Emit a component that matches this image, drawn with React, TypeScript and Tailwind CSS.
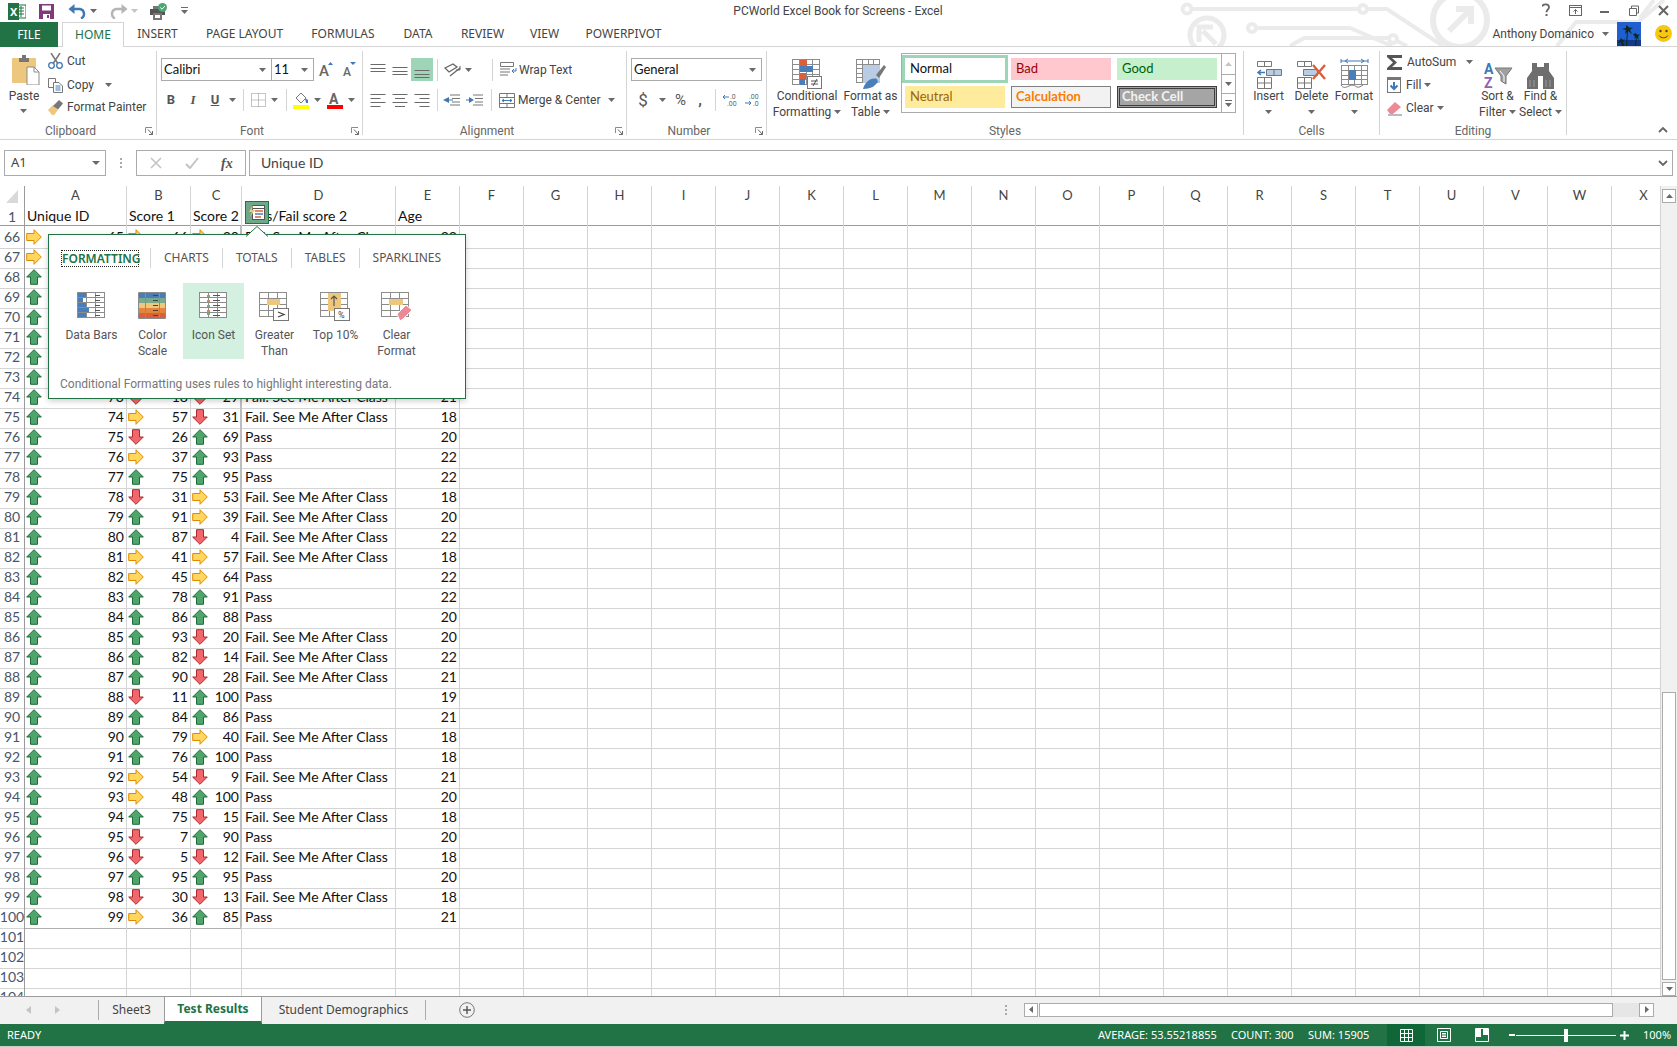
import React from 'react';

type ArrowKind = 'u' | 'y' | 'd';

// row number, B icon, B value, C icon, C value, pass, age
const rows: [number, ArrowKind, number, ArrowKind, number, boolean, number][] = [
  [66, 'y', 66, 'y', 30, false, 22],
  [67, 'y', 42, 'y', 50, false, 19],
  [68, 'u', 72, 'u', 81, true, 20],
  [69, 'u', 80, 'u', 77, true, 21],
  [70, 'u', 68, 'y', 44, false, 18],
  [71, 'u', 90, 'u', 92, true, 22],
  [72, 'y', 51, 'u', 70, true, 19],
  [73, 'd', 22, 'y', 60, true, 20],
  [74, 'd', 18, 'd', 29, false, 21],
  [75, 'y', 57, 'd', 31, false, 18],
  [76, 'd', 26, 'u', 69, true, 20],
  [77, 'y', 37, 'u', 93, true, 22],
  [78, 'u', 75, 'u', 95, true, 22],
  [79, 'd', 31, 'y', 53, false, 18],
  [80, 'u', 91, 'y', 39, false, 20],
  [81, 'u', 87, 'd', 4, false, 22],
  [82, 'y', 41, 'y', 57, false, 18],
  [83, 'y', 45, 'y', 64, true, 22],
  [84, 'u', 78, 'u', 91, true, 22],
  [85, 'u', 86, 'u', 88, true, 20],
  [86, 'u', 93, 'd', 20, false, 20],
  [87, 'u', 82, 'd', 14, false, 22],
  [88, 'u', 90, 'd', 28, false, 21],
  [89, 'd', 11, 'u', 100, true, 19],
  [90, 'u', 84, 'u', 86, true, 21],
  [91, 'u', 79, 'y', 40, false, 18],
  [92, 'u', 76, 'u', 100, true, 18],
  [93, 'y', 54, 'd', 9, false, 21],
  [94, 'y', 48, 'u', 100, true, 20],
  [95, 'u', 75, 'd', 15, false, 18],
  [96, 'd', 7, 'u', 90, true, 20],
  [97, 'd', 5, 'd', 12, false, 18],
  [98, 'u', 95, 'u', 95, true, 20],
  [99, 'd', 30, 'd', 13, false, 18],
  [100, 'y', 36, 'u', 85, true, 21],
];

const extraCols = 'F G H I J K L M N O P Q R S T U V W X'.split(' ');
const gridCols = 'grid grid-cols-[25px_102px_64px_51px_154px_64px_repeat(19,64px)]';
const line = 'border-r border-b border-[#d4d4d4]';

const Caret = ({ className = '' }: { className?: string }) => (
  <svg width="7" height="4" viewBox="0 0 7 4" className={className}>
    <path d="M0 0h7L3.5 4z" fill="#6a6a6a" />
  </svg>
);

const Arrow = ({ kind }: { kind: ArrowKind }) => {
  if (kind === 'u') {
    return (
      <svg width="16" height="16" viewBox="0 0 16 16" className="shrink-0">
        <path d="M8 .7 15.3 8H11.5v7.3h-7V8H.7z" fill="#4fa56c" stroke="#1f6b38" />
      </svg>
    );
  }
  if (kind === 'd') {
    return (
      <svg width="16" height="16" viewBox="0 0 16 16" className="shrink-0">
        <path d="M4.5.7h7V8h3.8L8 15.3.7 8h3.8z" fill="#f0686c" stroke="#a8282b" />
      </svg>
    );
  }
  return (
    <svg width="16" height="16" viewBox="0 0 16 16" className="shrink-0">
      <path d="M.7 4.5H8V.7L15.3 8 8 15.3v-3.8H.7z" fill="#ffd75e" stroke="#e08a00" />
    </svg>
  );
};

const AlignLines = ({ y, w = [15, 11, 15, 11] }: { y: number[]; w?: number[] }) => (
  <svg width="16" height="16" viewBox="0 0 16 16">
    {y.map((v, i) => (
      <rect key={i} x={(16 - (w[i] ?? 15)) / 2} y={v} width={w[i] ?? 15} height="1" fill="#6a6a6a" />
    ))}
  </svg>
);

const HAlign = ({ mode }: { mode: 'l' | 'c' | 'r' }) => {
  const ws = [15, 10, 15, 10];
  return (
    <svg width="16" height="14" viewBox="0 0 16 14">
      {ws.map((w, i) => (
        <rect
          key={i}
          x={mode === 'l' ? 0.5 : mode === 'r' ? 15.5 - w : (16 - w) / 2}
          y={1 + i * 4}
          width={w}
          height="1"
          fill="#6a6a6a"
        />
      ))}
    </svg>
  );
};

const TableGrid = ({ cols, rowsN, w, h }: { cols: number; rowsN: number; w: number; h: number }) => (
  <g stroke="#8c8c8c" fill="none">
    <rect x=".5" y=".5" width={w - 1} height={h - 1} fill="#fff" />
    {Array.from({ length: cols - 1 }).map((_, i) => (
      <path key={i} d={`M${0.5 + Math.round(((i + 1) * (w - 1)) / cols)} 0v${h}`} />
    ))}
    {Array.from({ length: rowsN - 1 }).map((_, i) => (
      <path key={i} d={`M0 ${0.5 + Math.round(((i + 1) * (h - 1)) / rowsN)}h${w}`} />
    ))}
  </g>
);

const Launcher = () => (
  <svg width="8" height="8" viewBox="0 0 8 8">
    <path d="M.5 6V.5H7" fill="none" stroke="#8a8a8a" />
    <path d="M3 2.5 7.5 7.5M7.5 4v3.5H4" fill="none" stroke="#6a6a6a" />
  </svg>
);

const Sep = ({ className = '' }: { className?: string }) => <div className={`w-px h-[22px] bg-[#d4d4d4] ${className}`} />;

const Group = ({
  label,
  launcher,
  className = '',
  children,
}: {
  label: string;
  launcher?: boolean;
  className?: string;
  children: React.ReactNode;
}) => (
  <div className={`flex flex-col mt-[4px] mb-[4px] border-r border-[#d4d4d4] shrink-0 ${className}`}>
    <div className="flex-1 min-h-0">{children}</div>
    <div className="flex items-center h-[14px] mb-[-3px] text-[#666]">
      <div className="flex-1 text-center leading-[14px]">{label}</div>
      {launcher && (
        <div className="w-[15px] flex justify-center">
          <Launcher />
        </div>
      )}
    </div>
  </div>
);

const BigButton = ({
  icon,
  lines,
  w,
  caret2 = false,
}: {
  icon: React.ReactNode;
  lines: string[];
  w: string;
  caret2?: boolean;
}) => (
  <div className={`flex flex-col items-center ${w}`}>
    <div className="h-[38px] flex items-end justify-center">{icon}</div>
    <div className="leading-[16px] mt-[-1px] whitespace-nowrap">{lines[0]}</div>
    {caret2 ? (
      <div className="leading-[16px] whitespace-nowrap flex items-center gap-[3px]">
        {lines[1]}
        <Caret />
      </div>
    ) : (
      <div className="h-[16px] flex items-center">
        <Caret />
      </div>
    )}
  </div>
);

const Combo = ({ text, w }: { text: string; w: string }) => (
  <div className={`${w} h-[23px] border border-[#ababab] bg-white flex items-center justify-between pl-[2px] pr-[5px]`}>
    <span className="font-['Lato',sans-serif] text-[13px] text-[#111]">{text}</span>
    <Caret />
  </div>
);

const PopTab = ({ children }: { children: string }) => (
  <div className="flex items-center">
    <div className="w-px h-[20px] bg-[#d4d4d4]" />
    <div className="px-[13px] font-['Noto_Sans',sans-serif]">{children}</div>
  </div>
);

const QuickItem = ({ icon, lines, active = false }: { icon: React.ReactNode; lines: string[]; active?: boolean }) => (
  <div className={`w-[61px] h-[76px] flex flex-col items-center ${active ? 'bg-[#d3f0e0]' : ''}`}>
    <div className="h-[35px] mt-[9px] flex items-start justify-center">{icon}</div>
    <div className="leading-[16px] text-center whitespace-nowrap">
      {lines.map((l) => (
        <div key={l}>{l}</div>
      ))}
    </div>
  </div>
);

export default function App() {
  return (
    <div className="relative w-[1677px] h-[1047px] overflow-hidden bg-white font-['Noto_Sans',sans-serif] text-[12px] text-[#444]">
      {/* title + tabs */}
      <div className="relative h-[47px]">
        <svg width="500" height="47" viewBox="1177 0 500 47" className="absolute right-0 top-0">
          <g fill="none" stroke="#ebebeb" strokeWidth="4">
            <circle cx="1187" cy="9" r="4.5" />
            <circle cx="1363" cy="9" r="4" />
            <path d="M1192 9h167M1368 9h19l56 37" />
            <circle cx="1460" cy="20" r="27" strokeWidth="6" />
            <path d="M1449 31 1471 9M1456 9h15v15" strokeWidth="6" />
            <circle cx="1207" cy="35" r="17" strokeWidth="5" />
            <path d="M1216 44 1203 31M1199 42V27h14" strokeWidth="5" />
            <circle cx="1252" cy="28" r="4" />
            <path d="M1257 28h93l42 18M1290 46l14-8h85" />
            <circle cx="1393" cy="39" r="4" />
            <path d="M1397 41l10 5M1557 46l19-24h62l26-22M1640 18l14-18" />
          </g>
        </svg>
        <div className="relative h-[22px] flex items-center">
          <div className="flex items-center">
            <svg width="18" height="17" viewBox="0 0 18 17" className="ml-[8px]">
              <rect x="7" y="2" width="11" height="13" fill="#fff" stroke="#217346" />
              <path d="M10 5h6M10 8h6M10 11h6M13 3v11" stroke="#217346" />
              <rect x="0" y="0" width="11" height="17" fill="#217346" />
              <text x="2" y="13" fill="#fff" fontSize="11" fontWeight="700">X</text>
            </svg>
            <svg width="15" height="15" viewBox="0 0 15 15" className="ml-[13px]">
              <path d="M0 0h15v15H0z" fill="#80397b" />
              <path d="M3 1.5h9v5H3z" fill="#fff" />
              <path d="M4 10h7v5H4z" fill="#fff" />
              <path d="M8 11h2v3H8z" fill="#80397b" />
            </svg>
            <svg width="19" height="15" viewBox="0 0 19 15" className="ml-[14px]">
              <path d="M5 5h7a5 5 0 0 1 1 9.5" fill="none" stroke="#3f78b5" strokeWidth="2.4" />
              <path d="M6.5 0v10L.5 5z" fill="#3f78b5" />
            </svg>
            <Caret className="ml-[3px]" />
            <svg width="19" height="15" viewBox="0 0 19 15" className="ml-[12px]">
              <path d="M14 5H7a5 5 0 0 0-1 9.5" fill="none" stroke="#b5b5b5" strokeWidth="2.4" />
              <path d="M12.5 0v10l6-5z" fill="#b5b5b5" />
            </svg>
            <svg width="7" height="4" viewBox="0 0 7 4" className="ml-[3px]">
              <path d="M0 0h7L3.5 4z" fill="#c4c4c4" />
            </svg>
            <svg width="18" height="17" viewBox="0 0 18 17" className="ml-[12px]">
              <path d="M3 3h8v4H3z" fill="#777" />
              <path d="M0 6h15v6H0z" fill="#555" />
              <path d="M3 10h9v7H3z" fill="#777" />
              <path d="M5 12h5v3H5z" fill="#fff" />
              <circle cx="12.5" cy="4.5" r="4.5" fill="#4aa873" />
              <path d="M10.3 4.5l1.7 1.7 2.8-3" fill="none" stroke="#fff" />
            </svg>
            <svg width="7" height="8" viewBox="0 0 7 8" className="ml-[13px]">
              <path d="M0 0h7v1H0zM0 3h7L3.5 7z" fill="#6a6a6a" />
            </svg>
          </div>
          <div className="flex-1" />
          <div className="absolute left-[688px] w-[300px] text-center text-[#444] whitespace-nowrap font-['Roboto',sans-serif]">PCWorld Excel Book for Screens - Excel</div>
          <svg width="131" height="16" viewBox="0 0 131 16" className="mr-[4px]">
            <path d="M0 3.5c1-3 7-3 7 .7 0 2.4-2.5 2.4-2.5 5" fill="none" stroke="#666" strokeWidth="1.8" />
            <rect x="3.5" y="11" width="2" height="2" fill="#666" />
            <g transform="translate(4 0)">
              <rect x="23.5" y="2.5" width="12" height="10" fill="none" stroke="#666" />
              <path d="M23.5 4.5h12M29.5 11V6.5M27.5 8.5l2-2 2 2" fill="none" stroke="#666" />
              <rect x="54" y="8" width="9" height="2" fill="#666" />
              <path d="M83.5 5.5h7v7h-7zM85.5 5.5v-2.500h7v7h-2" fill="none" stroke="#666" />
              <path d="M113 3l9 9M122 3l-9 9" stroke="#666" strokeWidth="2" />
            </g>
          </svg>
        </div>
        <div className="relative h-[25px] flex items-stretch border-b border-[#d4d4d4]">
          <div className="w-[58px] h-[25px] bg-[#217346] text-white flex items-center justify-center">FILE</div>
          <div className="ml-[4px] w-[62px] h-[25px] bg-white border border-b-0 border-[#d4d4d4] text-[#217346] flex items-center justify-center">HOME</div>
          <div className="w-[67px] text-center leading-[24px]">INSERT</div>
          <div className="w-[107px] text-center leading-[24px]">PAGE LAYOUT</div>
          <div className="w-[90px] text-center leading-[24px]">FORMULAS</div>
          <div className="w-[60px] text-center leading-[24px]">DATA</div>
          <div className="w-[69px] text-center leading-[24px]">REVIEW</div>
          <div className="w-[55px] text-center leading-[24px]">VIEW</div>
          <div className="w-[103px] text-center leading-[24px]">POWERPIVOT</div>
          <div className="flex-1" />
          <div className="flex items-center mb-[1px] text-[#444] font-['Roboto',sans-serif]">
            <span className="mr-[8px]">Anthony Domanico</span>
            <Caret className="mr-[8px]" />
            <svg width="24" height="24" viewBox="0 0 24 24" className="mr-[14px]">
              <rect width="24" height="24" fill="#1f5fd0" />
              <rect y="18" width="24" height="6" fill="#123a8a" />
              <path d="M9 3l4 3 3-1-3 3 2 4-4-3-3 3 1-4-4-1 4-1zM18 11l3 2 2-1-2 3 1 3-3-3-2 2 1-3-2-1z" fill="#10281c" />
              <path d="M10 9h1l-1 15H9zM19 14h1l-1 10h-1zM4 16l2 2 2-1-2 3 1 4H5l-1-4-3 1 2-3z" fill="#10281c" />
            </svg>
            <svg width="17" height="17" viewBox="0 0 17 17" className="mr-[5px]">
              <circle cx="8.500" cy="8.500" r="8.500" fill="#fbc70d" />
              <circle cx="5.500" cy="6" r="1.200" fill="#444" />
              <circle cx="11.500" cy="6" r="1.200" fill="#444" />
              <path d="M4 10.500c2 3 7 3 9 0" fill="none" stroke="#444" />
            </svg>
          </div>
        </div>
      </div>

      {/* ribbon */}
      <div className="h-[93px] flex border-b border-[#d4d4d4] font-['Roboto',sans-serif]">
        <Group label="Clipboard" launcher className="w-[157px]">
          <div className="flex">
            <div className="w-[46px] flex flex-col items-center">
              <svg width="28" height="30" viewBox="0 0 28 30" className="mt-[4px] ml-[5px]">
                <rect x="0" y="3" width="24" height="25" rx="1" fill="#eec77e" />
                <path d="M7 3h3V0h4v3h3v4H7z" fill="#777" />
                <path d="M15 12h7l5 5v13H15z" fill="#fff" stroke="#8c8c8c" />
                <path d="M22 12v5h5" fill="none" stroke="#8c8c8c" />
              </svg>
              <div className="leading-[16px] mt-[3px] ml-[2px]">Paste</div>
              <Caret className="mt-[5px]" />
            </div>
            <div className="ml-[2px]">
              <div className="h-[20px] flex items-center">
                <svg width="15" height="16" viewBox="0 0 15 16">
                  <path d="M3 0l6.500 10M12 0 5.500 10" stroke="#777" strokeWidth="1.500" />
                  <circle cx="3.500" cy="12.500" r="2.800" fill="none" stroke="#3f78b5" strokeWidth="1.300" />
                  <circle cx="11.500" cy="12.500" r="2.800" fill="none" stroke="#3f78b5" strokeWidth="1.300" />
                </svg>
                <span className="ml-[4px]">Cut</span>
              </div>
              <div className="h-[28px] flex items-center">
                <svg width="15" height="15" viewBox="0 0 15 15">
                  <path d="M.5.5h7v9h-7z" fill="#fff" stroke="#777" />
                  <path d="M5.500 4.500H11l3.500 3.500v6.500h-9z" fill="#fff" stroke="#777" />
                  <path d="M7.500 8h5M7.500 10h5M7.500 12h5" stroke="#3f78b5" />
                </svg>
                <span className="ml-[4px]">Copy</span>
                <Caret className="ml-[11px]" />
              </div>
              <div className="h-[16px] flex items-center">
                <svg width="15" height="15" viewBox="0 0 15 15">
                  <path d="M0 10l5-5 5 5-4 5H4z" fill="#eec77e" />
                  <path d="M5 6 11 0l4 3.500-5 6z" fill="#777" />
                </svg>
                <span className="ml-[4px]">Format Painter</span>
              </div>
            </div>
          </div>
        </Group>

        <Group label="Font" launcher className="w-[206px]">
          <div className="flex items-center mt-[7px] ml-[4px]">
            <Combo text="Calibri" w="w-[111px]" />
            <Combo text="11" w="w-[43px] -ml-px" />
            <svg width="15" height="16" viewBox="0 0 15 16" className="ml-[5px] overflow-visible">
              <text x="0" y="14" fontSize="15" fill="#666" fontWeight="500">A</text>
              <path d="M9 3l2.500-3L14 3z" fill="#3f78b5" />
            </svg>
            <svg width="15" height="16" viewBox="0 0 15 16" className="ml-[8px] overflow-visible">
              <text x="1" y="14" fontSize="12" fill="#666" fontWeight="500">A</text>
              <path d="M8 0h6l-3 3z" fill="#3f78b5" />
            </svg>
          </div>
          <div className="flex items-center h-[22px] mt-[8px] ml-[3px]">
            <div className="w-[22px] text-center font-bold text-[13px] text-[#555]">B</div>
            <div className="w-[22px] text-center italic font-['Liberation_Serif',serif] font-bold text-[13px] text-[#555]">I</div>
            <div className="w-[22px] text-center font-bold text-[13px] underline text-[#555]">U</div>
            <div className="w-[12px] flex justify-center"><Caret /></div>
            <Sep className="ml-[5px]" />
            <svg width="15" height="14" viewBox="0 0 15 14" className="ml-[7px]">
              <path d="M.5.5h14v13H.5zM7.500.5v13M.5 7h14" fill="none" stroke="#8c8c8c" strokeDasharray="1 1" />
            </svg>
            <Caret className="ml-[5px]" />
            <Sep className="ml-[8px]" />
            <svg width="16" height="18" viewBox="0 0 16 18" className="ml-[6px]">
              <path d="M3 7l5-5 5 5-5 5z" fill="#fff" stroke="#777" />
              <path d="M12 7l3 2v3h-2z" fill="#3f78b5" />
              <rect y="14" width="16" height="4" fill="#ffff00" />
            </svg>
            <Caret className="ml-[5px]" />
            <svg width="16" height="18" viewBox="0 0 16 18" className="ml-[6px]">
              <text x="2" y="13" fontSize="14" fontWeight="700" fill="#666">A</text>
              <rect y="14" width="16" height="4" fill="#ff0000" />
            </svg>
            <Caret className="ml-[5px]" />
          </div>
        </Group>

        <Group label="Alignment" launcher className="w-[264px]">
          <div className="flex items-center h-[23px] mt-[7px] ml-[4px]">
            <div className="w-[22px] flex justify-center"><AlignLines y={[2, 6, 9]} w={[15, 15, 15]} /></div>
            <div className="w-[22px] flex justify-center"><AlignLines y={[5, 9, 12]} w={[15, 15, 15]} /></div>
            <div className="w-[22px] h-[23px] bg-[#9fd5b7] flex items-end justify-center pb-[2px]"><AlignLines y={[7, 11, 14]} w={[15, 15, 15]} /></div>
            <Sep className="ml-[4px]" />
            <svg width="19" height="16" viewBox="0 0 19 16" className="ml-[5px]">
              <path d="M2 6l8-4 4 3-8 5zM7 14 17 6" fill="none" stroke="#666" strokeWidth="1.300" />
              <path d="M17 4v4h-4" fill="none" stroke="#666" />
            </svg>
            <Caret className="ml-[3px]" />
            <Sep className="ml-[20px]" />
            <svg width="17" height="15" viewBox="0 0 17 15" className="ml-[7px]">
              <path d="M.5.5h13v4H.5zM0 7h10M0 10h10M0 13h8" fill="none" stroke="#777" />
              <path d="M16 6v3h-4M12 9l2-2M12 9l2 2" fill="none" stroke="#3f78b5" />
            </svg>
            <span className="ml-[2px]">Wrap Text</span>
          </div>
          <div className="flex items-center h-[22px] mt-[8px] ml-[4px]">
            <div className="w-[22px] flex justify-center"><HAlign mode="l" /></div>
            <div className="w-[22px] flex justify-center"><HAlign mode="c" /></div>
            <div className="w-[22px] flex justify-center"><HAlign mode="r" /></div>
            <Sep className="ml-[4px]" />
            <svg width="17" height="12" viewBox="0 0 17 12" className="ml-[5px]">
              <path d="M7 1h10M9 4.500h8M9 8h8M7 11h10" stroke="#777" />
              <path d="M6 3v6L0 6z" fill="#3f78b5" />
              <path d="M5 6h5" stroke="#3f78b5" />
            </svg>
            <svg width="17" height="12" viewBox="0 0 17 12" className="ml-[6px]">
              <path d="M7 1h10M9 4.500h8M9 8h8M7 11h10" stroke="#777" />
              <path d="M3 3v6l5-3z" fill="#3f78b5" />
              <path d="M0 6h4" stroke="#3f78b5" />
            </svg>
            <Sep className="ml-[8px]" />
            <svg width="16" height="15" viewBox="0 0 16 15" className="ml-[7px]">
              <path d="M.5.5h15v14H.5zM.5 4.500h15M.5 10.500h15M8 .5v4M8 10.500v4" fill="none" stroke="#777" />
              <path d="M3 7.500h10M3 7.500l2-1.500M3 7.500l2 1.500M13 7.500l-2-1.500M13 7.500l-2 1.500" stroke="#3f78b5" fill="none" />
            </svg>
            <span className="ml-[3px]">Merge &amp; Center</span>
            <Caret className="ml-[8px]" />
          </div>
        </Group>

        <Group label="Number" launcher className="w-[140px]">
          <div className="mt-[7px] ml-[4px]">
            <Combo text="General" w="w-[131px]" />
          </div>
          <div className="flex items-center h-[22px] mt-[8px] ml-[5px]">
            <div className="w-[22px] text-center text-[17px] leading-[22px] text-[#555]">$</div>
            <Caret className="ml-[5px]" />
            <div className="w-[29px] text-center text-[15px] text-[#555]">%</div>
            <div className="w-[12px] ml-[-1px] text-center font-bold text-[15px] leading-[18px] text-[#555]">,</div>
            <Sep className="ml-[9px]" />
            <svg width="16" height="14" viewBox="0 0 16 14" className="ml-[7px]">
              <text x="7" y="6" fontSize="7" fill="#666">.0</text>
              <text x="4" y="13" fontSize="7" fill="#666">.00</text>
              <path d="M0 4h6M0 4l2-2M0 4l2 2" stroke="#3f78b5" fill="none" />
            </svg>
            <svg width="16" height="14" viewBox="0 0 16 14" className="ml-[6px]">
              <text x="4" y="6" fontSize="7" fill="#666">.00</text>
              <text x="8" y="13" fontSize="7" fill="#666">.0</text>
              <path d="M0 10h6M6 10l-2-2M6 10l-2 2" stroke="#3f78b5" fill="none" />
            </svg>
          </div>
        </Group>

        <Group label="Styles" className="w-[477px]">
          <div className="flex">
            <div className="ml-[7px]">
              <BigButton
                w="w-[66px]"
                caret2
                lines={['Conditional', 'Formatting']}
                icon={
                  <svg width="30" height="30" viewBox="0 0 30 30">
                    <TableGrid cols={4} rowsN={5} w={28} h={26} />
                    <path d="M8 1h7v6H8zM8 14h6v6H8z" fill="#d9603b" />
                    <path d="M8 7h13v6H8zM8 20h5v6H8z" fill="#4a7ebb" />
                    <rect x="15.500" y="17.500" width="14" height="12" fill="#fff" stroke="#777" />
                    <path d="M19 22h7M19 25h7M25 20l-4 7" stroke="#555" fill="none" />
                  </svg>
                }
              />
            </div>
            <BigButton
              w="w-[61px]"
              caret2
              lines={['Format as', 'Table']}
              icon={
                <svg width="30" height="30" viewBox="0 0 30 30">
                  <TableGrid cols={4} rowsN={5} w={24} h={24} />
                  <path d="M7 6h17v18H7z" fill="#b8cce4" />
                  <path d="M20 16 28 6l2 2-7 11z" fill="#777" />
                  <path d="M7 30c2-7 8-12 14-10l1 3c-3 3-5 7-15 7z" fill="#4a7ebb" />
                </svg>
              }
            />
            <div className="mt-[2px] h-[60px] w-[335px] border border-[#ababab] flex bg-white">
              <div className="w-[320px] pl-[3px] pt-[4px] grid grid-cols-[100px_100px_100px] gap-x-[6px] gap-y-[6px] auto-rows-[22px] font-['Lato',sans-serif] text-[13px]">
                <div className="ring-[3px] ring-[#9fd5b7] flex items-center px-[5px] text-[#111]">Normal</div>
                <div className="bg-[#ffc7ce] text-[#9c0006] flex items-center px-[5px]">Bad</div>
                <div className="bg-[#c6efce] text-[#006100] flex items-center px-[5px]">Good</div>
                <div className="bg-[#ffeb9c] text-[#9c6500] flex items-center px-[5px]">Neutral</div>
                <div className="bg-[#f2f2f2] border border-[#7f7f7f] text-[#fa7d00] font-bold flex items-center px-[4px]">Calculation</div>
                <div className="bg-[#a5a5a5] border-[3px] border-double border-[#3f3f3f] text-[#f2f2f2] font-bold flex items-center px-[2px]">Check Cell</div>
              </div>
              <div className="w-[14px] ml-auto border-l border-[#ababab] flex flex-col">
                <div className="h-[21px] border-b border-[#ababab] flex items-center justify-center">
                  <svg width="7" height="4" viewBox="0 0 7 4"><path d="M3.500 0 7 4H0z" fill="#c4c4c4" /></svg>
                </div>
                <div className="h-[19px] border-b border-[#ababab] flex items-center justify-center"><Caret /></div>
                <div className="flex-1 flex flex-col items-center justify-center gap-[2px]">
                  <div className="w-[7px] h-px bg-[#6a6a6a]" />
                  <Caret />
                </div>
              </div>
            </div>
          </div>
        </Group>

        <Group label="Cells" className="w-[136px]">
          <div className="flex ml-[3px]">
            <BigButton
              w="w-[43px]"
              lines={['Insert']}
              icon={
                <svg width="26" height="28" viewBox="0 0 26 28">
                  <path d="M1.500.5h14v5h-14zM8.500.5v5M1.500 16.500h14v11h-14zM1.500 22h14M8.500 16.500v11" fill="none" stroke="#777" />
                  <path d="M10.500 8.500h15v6h-15zM18 8.500v6" fill="#b8cce4" stroke="#777" />
                  <path d="M9 11.500H2M5 9l-3 2.500L5 14" fill="none" stroke="#3f78b5" strokeWidth="1.500" />
                </svg>
              }
            />
            <BigButton
              w="w-[43px]"
              lines={['Delete']}
              icon={
                <svg width="29" height="28" viewBox="0 0 29 28">
                  <path d="M.5.500h14v5H.5zM7.500.500v5M.5 16.500h14v11H.5zM.5 22h14M7.500 16.500v11" fill="none" stroke="#777" />
                  <path d="M6.500 8.500h14v6h-14z" fill="#b8cce4" stroke="#777" />
                  <path d="M16 4l12 14M28 4 16 18" stroke="#d9603b" strokeWidth="2.400" />
                </svg>
              }
            />
            <BigButton
              w="w-[42px]"
              lines={['Format']}
              icon={
                <svg width="29" height="32" viewBox="0 0 29 32">
                  <path d="M1 4h27M1 2v4M28 2v4M5 4l3-2M5 4l3 2M24 4l-3-2M24 4l-3 2" stroke="#3f78b5" fill="none" />
                  <g transform="translate(1 8)">
                    <TableGrid cols={4} rowsN={4} w={27} h={20} />
                    <rect x="8" y="5" width="7" height="10" fill="#4a7ebb" />
                  </g>
                  <path d="M1 28c2 3 4 3 8 1s6 0 8 1 4-1 6-2" fill="none" stroke="#777" />
                </svg>
              }
            />
          </div>
        </Group>

        <Group label="Editing" className="w-[187px]">
          <div className="flex">
            <div className="ml-[7px] w-[89px]">
              <div className="h-[22px] flex items-center">
                <svg width="16" height="15" viewBox="0 0 16 15">
                  <path d="M0 0h15v3H5l5 4.500L5 12h10v3H0v-2l6-5.500L0 2z" fill="#555" />
                </svg>
                <span className="ml-[4px]">AutoSum</span>
                <Caret className="ml-[10px]" />
              </div>
              <div className="h-[24px] flex items-center">
                <svg width="15" height="16" viewBox="0 0 15 16">
                  <rect x=".5" y=".5" width="13" height="15" fill="#fff" stroke="#777" />
                  <rect width="14" height="3" fill="#777" />
                  <path d="M7 5v7M3.500 8.500 7 12l3.500-3.500" fill="none" stroke="#3f78b5" strokeWidth="2" />
                </svg>
                <span className="ml-[4px]">Fill</span>
                <Caret className="ml-[3px]" />
              </div>
              <div className="h-[22px] flex items-center">
                <svg width="15" height="15" viewBox="0 0 15 15">
                  <path d="M0 9l8-8 6 5-8 7H3z" fill="#ec8a98" />
                  <path d="M1 14h14" stroke="#777" />
                </svg>
                <span className="ml-[4px]">Clear</span>
                <Caret className="ml-[3px]" />
              </div>
            </div>
            <BigButton
              w="w-[43px]"
              caret2
              lines={['Sort &', 'Filter']}
              icon={
                <svg width="30" height="28" viewBox="0 0 30 28">
                  <text x="1" y="13" fontSize="14" fontWeight="700" fill="#3f78b5">A</text>
                  <text x="1" y="27" fontSize="14" fontWeight="700" fill="#8e62b5">Z</text>
                  <path d="M12 7h17l-6 8v8l-5-3v-5z" fill="#a0a0a0" stroke="#777" />
                  <path d="M17 10l4 5v6" fill="none" stroke="#fff" />
                </svg>
              }
            />
            <BigButton
              w="w-[43px]"
              caret2
              lines={['Find &', 'Select']}
              icon={
                <svg width="27" height="26" viewBox="0 0 27 26">
                  <path d="M5 0h5v4h7V0h5v8l5 7v11H16V13h-5v13H0V15l5-7z" fill="#6e6e6e" />
                  <path d="M3 17v7M7 17v7M19 17v7M23 17v7" stroke="#9a9a9a" />
                </svg>
              }
            />
          </div>
        </Group>

        <div className="flex-1 flex items-end justify-end pr-[9px] pb-[6px]">
          <svg width="10" height="6" viewBox="0 0 10 6">
            <path d="M1 5l4-4 4 4" fill="none" stroke="#666" strokeWidth="1.800" />
          </svg>
        </div>
      </div>

      {/* formula bar */}
      <div className="h-[26px] mt-[10px] flex items-stretch text-[13px]">
        <div className="ml-[4px] w-[102px] border border-[#ababab] flex items-center justify-between pl-[6px] pr-[5px]">
          <span className="text-[#444]">A1</span>
          <svg width="8" height="4" viewBox="0 0 8 4"><path d="M0 0h8L4 4z" fill="#6a6a6a" /></svg>
        </div>
        <div className="w-[30px] flex flex-col items-center justify-center gap-[2px]">
          <div className="w-[2px] h-[2px] bg-[#aaa]" />
          <div className="w-[2px] h-[2px] bg-[#aaa]" />
          <div className="w-[2px] h-[2px] bg-[#aaa]" />
        </div>
        <div className="w-[110px] border border-[#ababab] flex items-center">
          <svg width="12" height="12" viewBox="0 0 12 12" className="ml-[13px]">
            <path d="M1 1l10 10M11 1 1 11" stroke="#c4c4c4" strokeWidth="1.600" />
          </svg>
          <svg width="14" height="12" viewBox="0 0 14 12" className="ml-[23px]">
            <path d="M1 7l4 4 8-10" fill="none" stroke="#c4c4c4" strokeWidth="2" />
          </svg>
          <span className="ml-[22px] font-['Liberation_Serif',serif] italic font-bold text-[14px] text-[#555]">fx</span>
        </div>
        <div className="ml-[3px] w-[1424px] border border-[#ababab] flex items-center justify-between pl-[11px] pr-[4px]">
          <span className="font-['Lato',sans-serif] text-[14px] text-[#444] pb-[1px]">Unique ID</span>
          <svg width="10" height="6" viewBox="0 0 10 6">
            <path d="M1 1l4 4 4-4" fill="none" stroke="#666" strokeWidth="1.800" />
          </svg>
        </div>
      </div>

      {/* sheet */}
      <div className="mt-[10px] h-[810px] flex font-['Lato',sans-serif] text-[14px] text-[#111]">
        <div className="w-[1660px] overflow-hidden">
          <div className={`${gridCols} h-[20px] text-[13px] text-[#444] w-max`}>
            <div className="border-r border-[#9b9b9b] flex items-center justify-center">
              <svg width="12" height="13" viewBox="0 0 12 13"><path d="M12 0v13H0z" fill="#d9d9d9" /></svg>
            </div>
            {['A', 'B', 'C', 'D', 'E', ...extraCols].map((c) => (
              <div key={c} className="border-r border-[#d4d4d4] flex items-center justify-center">{c}</div>
            ))}
          </div>
          <div className={`${gridCols} h-[20px] border-b border-[#9b9b9b] w-max`}>
            <div className="border-r border-[#9b9b9b] flex items-center justify-center text-[#4a5568]">1</div>
            <div className="border-r border-[#d4d4d4] pl-[2px] leading-[19px]">Unique ID</div>
            <div className="border-r border-[#d4d4d4] pl-[2px] leading-[19px]">Score 1</div>
            <div className="border-r border-[#d4d4d4] pl-[2px] leading-[19px]">Score 2</div>
            <div className="border-r border-[#d4d4d4] pl-[3px] leading-[19px] whitespace-nowrap overflow-hidden">Pass/Fail score 2</div>
            <div className="border-r border-[#d4d4d4] pl-[2px] leading-[19px]">Age</div>
            {extraCols.map((c) => (
              <div key={c} className="border-r border-[#d4d4d4]" />
            ))}
          </div>
          {rows.map(([n, bk, bv, ck, cv, pass, age]) => {
            const edge = n === 100 ? 'border-b-[#b0b0b0]' : '';
            return (
              <div key={n} className={`${gridCols} h-[20px] w-max`}>
                <div className="border-r border-b border-r-[#9b9b9b] border-b-[#d4d4d4] flex items-center justify-center text-[#4a5568] pb-[1px]">{n}</div>
                <div className={`${line} ${edge} flex items-center justify-between pl-[1px] pr-[2px]`}>
                  <Arrow kind={n < 68 ? 'y' : 'u'} />
                  <span className="pb-[1px]">{n - 1}</span>
                </div>
                <div className={`${line} ${edge} flex items-center justify-between pl-[1px] pr-[2px]`}>
                  <Arrow kind={bk} />
                  <span className="pb-[1px]">{bv}</span>
                </div>
                <div className={`border-b border-[#d4d4d4] border-r-2 border-r-[#bdbdbd] ${edge} flex items-center justify-between pl-[1px] pr-[1px]`}>
                  <Arrow kind={ck} />
                  <span className="pb-[1px]">{cv}</span>
                </div>
                <div className={`${line} flex items-center pl-[3px] pb-[1px] whitespace-nowrap`}>{pass ? 'Pass' : 'Fail. See Me After Class'}</div>
                <div className={`${line} flex items-center justify-end pr-[2px] pb-[1px]`}>{age}</div>
                {extraCols.map((c) => (
                  <div key={c} className={line} />
                ))}
              </div>
            );
          })}
          {[101, 102, 103, 104].map((n) => (
            <div key={n} className={`${gridCols} h-[20px] w-max`}>
              <div className="border-r border-b border-r-[#9b9b9b] border-b-[#d4d4d4] flex items-center justify-center text-[#4a5568] pb-[1px]">{n}</div>
              {['A', 'B', 'C', 'D', 'E', ...extraCols].map((c) => (
                <div key={c} className={line} />
              ))}
            </div>
          ))}
        </div>
        {/* vertical scrollbar */}
        <div className="w-[17px] flex flex-col items-center bg-[#f1f1f1] border-l border-[#d4d4d4]">
          <div className="mt-[3px] w-[14px] h-[14px] bg-white border border-[#ababab] flex items-center justify-center">
            <svg width="7" height="4" viewBox="0 0 7 4"><path d="M3.500 0 7 4H0z" fill="#6a6a6a" /></svg>
          </div>
          <div className="mt-[489px] w-[14px] h-[288px] bg-white border border-[#ababab]" />
          <div className="mt-[2px] w-[14px] h-[14px] bg-white border border-[#ababab] flex items-center justify-center">
            <Caret />
          </div>
        </div>
      </div>

      {/* sheet tabs */}
      <div className="h-[28px] bg-[#f1f1f1] border-t border-[#9b9b9b] flex items-center text-[12px] pb-[2px]">
        <svg width="5" height="8" viewBox="0 0 5 8" className="ml-[26px]"><path d="M5 0v8L0 4z" fill="#c4c4c4" /></svg>
        <svg width="5" height="8" viewBox="0 0 5 8" className="ml-[24px]"><path d="M0 0v8l5-4z" fill="#c4c4c4" /></svg>
        <div className="ml-[38px] w-px h-[20px] bg-[#ababab]" />
        <div className="w-[65px] text-center">Sheet3</div>
        <div className="w-[98px] h-[28px] self-start mt-[-1px] bg-white border-x border-t border-[#9b9b9b] border-b-[3px] border-b-[#217346] text-[#217346] font-bold flex items-center justify-center">Test Results</div>
        <div className="w-[163px] text-center">Student Demographics</div>
        <div className="w-px h-[20px] bg-[#ababab]" />
        <svg width="16" height="16" viewBox="0 0 16 16" className="ml-[33px]">
          <circle cx="8" cy="8" r="7.300" fill="none" stroke="#777" />
          <path d="M8 4v8M4 8h8" stroke="#555" strokeWidth="1.400" />
        </svg>
        <div className="ml-[530px] flex flex-col gap-[2px]">
          <div className="w-[2px] h-[2px] bg-[#aaa]" />
          <div className="w-[2px] h-[2px] bg-[#aaa]" />
          <div className="w-[2px] h-[2px] bg-[#aaa]" />
        </div>
        <div className="ml-[17px] w-[14px] h-[14px] bg-white border border-[#ababab] flex items-center justify-center">
          <svg width="4" height="7" viewBox="0 0 4 7"><path d="M4 0v7L0 3.500z" fill="#6a6a6a" /></svg>
        </div>
        <div className="ml-[1px] w-[574px] h-[14px] bg-white border border-[#ababab]" />
        <div className="w-[26px] h-[14px] bg-[#e6e6e6]" />
        <div className="w-[15px] h-[14px] bg-white border border-[#ababab] flex items-center justify-center">
          <svg width="4" height="7" viewBox="0 0 4 7"><path d="M0 0v7l4-3.500z" fill="#6a6a6a" /></svg>
        </div>
      </div>

      {/* status bar */}
      <div className="h-[22px] bg-[#217346] text-white flex items-center text-[11px]">
        <div className="w-[1098px] pl-[7px]">READY</div>
        <span className="w-[133px]">AVERAGE: 53.55218855</span>
        <span className="w-[77px]">COUNT: 300</span>
        <span className="w-[79px]">SUM: 15905</span>
        <div className="w-[38px] h-[22px] bg-[#0f6636] flex items-center justify-center">
          <svg width="13" height="13" viewBox="0 0 13 13">
            <path d="M.5.500h12v12H.5zM.5 4.500h12M.5 8.500h12M4.500.5v12M8.500.5v12" fill="none" stroke="#fff" />
          </svg>
        </div>
        <svg width="14" height="14" viewBox="0 0 14 14" className="ml-[12px]">
          <path d="M.5.500h13v13H.5z" fill="none" stroke="#fff" />
          <path d="M3.500 3.500h7v7h-7zM5 5.500h4M5 7h4M5 8.500h4" fill="none" stroke="#fff" />
        </svg>
        <svg width="14" height="14" viewBox="0 0 14 14" className="ml-[24px]">
          <path d="M.5.500h13v13H.5z" fill="none" stroke="#fff" />
          <path d="M1 1h5v8H1zM8 1h5v6H8z" fill="#fff" />
        </svg>
        <div className="ml-[20px] w-[6px] h-[2px] bg-white" />
        <div className="relative ml-[1px] w-[100px] h-px bg-white">
          <div className="absolute left-[48px] top-[-6px] w-[4px] h-[13px] bg-white" />
        </div>
        <svg width="9" height="9" viewBox="0 0 9 9" className="ml-[4px]">
          <path d="M4.500 0v9M0 4.500h9" stroke="#fff" strokeWidth="2" />
        </svg>
        <span className="ml-[14px]">100%</span>
      </div>
      <div className="h-px bg-[#cccccc]" />

      {/* quick analysis */}
      <div className="absolute left-[245px] top-[201px] w-[24px] h-[23px] bg-[#6fa888] border border-[#217346] flex items-center justify-center">
        <svg width="16" height="15" viewBox="0 0 16 15">
          <rect x="3.500" y=".5" width="12" height="14" fill="#fff" stroke="#555" />
          <path d="M3.500 3.500h12" stroke="#555" />
          <path d="M6 6h8" stroke="#d9603b" strokeWidth="1.500" />
          <path d="M6 9h8" stroke="#4a7ebb" strokeWidth="1.500" />
          <path d="M6 12h6" stroke="#d9603b" strokeWidth="1.500" />
          <path d="M4 0 0 7h3L1 12l5-7H3z" fill="#eec77e" />
        </svg>
      </div>
      <svg width="22" height="11" viewBox="0 0 22 11" className="absolute left-[246px] top-[226px] z-10">
        <path d="M0 10.500 11 .5l11 10" fill="#fff" stroke="#217346" />
      </svg>
      <div className="absolute left-[48px] top-[234px] w-[418px] h-[165px] bg-white border border-[#217346] shadow-[0_2px_6px_rgba(0,0,0,0.2)] text-[#555] font-['Roboto',sans-serif]">
        <div className="flex items-center mt-[13px] h-[20px] ml-[12px]">
          <div className="border border-dotted border-[#222] text-[#217346] font-semibold leading-[15px] w-[78px] text-center mr-[11px] font-['Noto_Sans',sans-serif]">FORMATTING</div>
          <PopTab>CHARTS</PopTab>
          <PopTab>TOTALS</PopTab>
          <PopTab>TABLES</PopTab>
          <PopTab>SPARKLINES</PopTab>
        </div>
        <div className="flex ml-[12px] mt-[15px]">
          <QuickItem
            lines={['Data Bars']}
            icon={
              <svg width="29" height="27" viewBox="0 0 29 27">
                <TableGrid cols={3} rowsN={5} w={28} h={26} />
                <path d="M1 1h8v4H1zM1 11h8v4H1zM1 21h8v4H1z" fill="#4a7ebb" />
                <path d="M1 6h5v4H1zM1 16h11v4H1z" fill="#4a7ebb" />
                <path d="M18 3.500h5M18 8.500h5M18 13.500h5M18 18.500h5M18 23.500h5" stroke="#555" />
              </svg>
            }
          />
          <QuickItem
            lines={['Color', 'Scale']}
            icon={
              <svg width="29" height="27" viewBox="0 0 29 27">
                <rect x="1" y="1" width="27" height="5" fill="#4a7ebb" />
                <rect x="1" y="6" width="27" height="5" fill="#7aa88c" />
                <rect x="1" y="11" width="27" height="5" fill="#eec77e" />
                <rect x="1" y="16" width="27" height="5" fill="#e5843b" />
                <rect x="1" y="21" width="27" height="5" fill="#d9603b" />
                <path d="M.5.5h27v26H.5zM7.500.5v26M21.500.5v26" fill="none" stroke="#8c8c8c" />
                <path d="M15 3.500h5M15 8.500h5M15 13.500h5M15 18.500h5M15 23.500h5" stroke="#444" />
              </svg>
            }
          />
          <QuickItem
            active
            lines={['Icon Set']}
            icon={
              <svg width="29" height="27" viewBox="0 0 29 27">
                <TableGrid cols={3} rowsN={5} w={28} h={26} />
                <path d="M8 3h3v2H8zM8 13h3v2H8zM8 23h3v-2H8z" fill="#7aa88c" />
                <path d="M8 8h3v2H8zM8 18h3v2H8z" fill="#e5843b" />
                <path d="M14 3.500h7M14 8.500h7M14 13.500h7M14 18.500h7M14 23.500h7" stroke="#555" />
              </svg>
            }
          />
          <QuickItem
            lines={['Greater', 'Than']}
            icon={
              <svg width="31" height="29" viewBox="0 0 31 29">
                <TableGrid cols={3} rowsN={4} w={28} h={25} />
                <rect x="8" y="7" width="13" height="6" fill="#eec77e" />
                <rect x="14.500" y="16.500" width="15" height="12" fill="#fff" stroke="#777" />
                <path d="M19 20l6 2.500-6 2.500" fill="none" stroke="#444" strokeWidth="1.300" />
              </svg>
            }
          />
          <QuickItem
            lines={['Top 10%']}
            icon={
              <svg width="31" height="29" viewBox="0 0 31 29">
                <TableGrid cols={3} rowsN={4} w={28} h={25} />
                <rect x="8" y="1" width="13" height="18" fill="#eec77e" />
                <path d="M14 14V4M11 7l3-3 3 3" fill="none" stroke="#555" strokeWidth="1.200" />
                <rect x="14.500" y="16.500" width="15" height="12" fill="#fff" stroke="#777" />
                <text x="18" y="26" fontSize="9" fill="#444">%</text>
              </svg>
            }
          />
          <QuickItem
            lines={['Clear', 'Format']}
            icon={
              <svg width="31" height="30" viewBox="0 0 31 30">
                <TableGrid cols={3} rowsN={4} w={28} h={25} />
                <rect x="8" y="7" width="14" height="6" fill="#eec77e" />
                <path d="M16 22l9-9 6 5-9 9-3 2z" fill="#ec8a98" stroke="#fff" />
              </svg>
            }
          />
        </div>
        <div className="ml-[11px] mt-[16px] text-[#777] text-[12px]">Conditional Formatting uses rules to highlight interesting data.</div>
      </div>
    </div>
  );
}
